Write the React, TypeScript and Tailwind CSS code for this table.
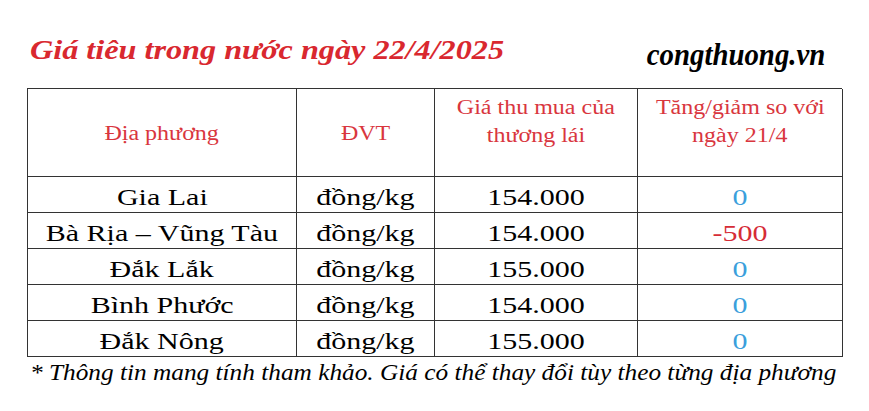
import React from "react";

const rows = [
  { name: "Gia Lai", price: "154.000", diff: "0" },
  { name: "Bà Rịa – Vũng Tàu", price: "154.000", diff: "-500" },
  { name: "Đắk Lắk", price: "155.000", diff: "0" },
  { name: "Bình Phước", price: "154.000", diff: "0" },
  { name: "Đắk Nông", price: "155.000", diff: "0" },
];

function S({ children, className = "" }: { children: React.ReactNode; className?: string }) {
  return <span className={"inline-block whitespace-nowrap " + className}>{children}</span>;
}

const cell = "border-r-[1.5px] border-b-[1.5px] border-[#333] text-center";

export default function App() {
  return (
    <div className="w-[869px] h-[411px] bg-white text-black overflow-hidden font-['Liberation_Serif','Times_New_Roman',serif]">
      <div className="flex items-end justify-between pl-[30px] pr-[44px] pt-[30px] h-[66px]">
        <span className="inline-block whitespace-nowrap origin-left scale-x-[1.15] text-[28px] leading-[32px] font-bold italic text-[#d9282f]">
          Giá tiêu trong nước ngày 22/4/2025
        </span>
        <span className="inline-block whitespace-nowrap origin-right scale-x-[0.9] text-[32px] leading-[32px] font-bold italic mb-[-4px]">
          congthuong.vn
        </span>
      </div>
      <div className="ml-[27px] mt-[22px] w-[815px] border-t-[1.5px] border-l-[1.5px] border-[#333]">
        <div className="grid grid-cols-[269px_138px_203px_205px] text-[20px] text-[#d9363e]">
          <div className={"h-[88px] pt-[30px] leading-[28px] " + cell}>
            <S className="scale-x-[1.2]">Địa phương</S>
          </div>
          <div className={"h-[88px] pt-[30px] leading-[28px] " + cell}>
            <S className="scale-x-[1.2]">ĐVT</S>
          </div>
          <div className={"h-[88px] pt-[4px] leading-[28px] " + cell}>
            <div><S className="scale-x-[1.2]">Giá thu mua của</S></div>
            <div><S className="scale-x-[1.2]">thương lái</S></div>
          </div>
          <div className={"h-[88px] pt-[4px] leading-[28px] " + cell}>
            <div><S className="scale-x-[1.2]">Tăng/giảm so với</S></div>
            <div><S className="scale-x-[1.2]">ngày 21/4</S></div>
          </div>
        </div>
        {rows.map((r) => (
          <div key={r.name} className="grid grid-cols-[269px_138px_203px_205px] text-[24px] leading-[36px]">
            <div className={"h-[36px] pt-[2px] " + cell}>
              <S className="scale-x-[1.25]">{r.name}</S>
            </div>
            <div className={"h-[36px] pt-[2px] " + cell}>
              <S className="scale-x-[1.25]">đồng/kg</S>
            </div>
            <div className={"h-[36px] pt-[2px] " + cell}>
              <S className="scale-x-[1.25]">{r.price}</S>
            </div>
            <div
              className={
                "h-[36px] pt-[2px] " + cell + " " + (r.diff === "0" ? "text-[#3b9fdc]" : "text-[#d62c36]")
              }
            >
              <S className="scale-x-[1.25]">{r.diff}</S>
            </div>
          </div>
        ))}
      </div>
      <div className="pl-[30px] pt-[1px] text-[23px] leading-[30px] italic">
        <span className="inline-block whitespace-nowrap origin-left scale-x-[1.1]">
          * Thông tin mang tính tham khảo. Giá có thể thay đổi tùy theo từng địa phương
        </span>
      </div>
    </div>
  );
}
